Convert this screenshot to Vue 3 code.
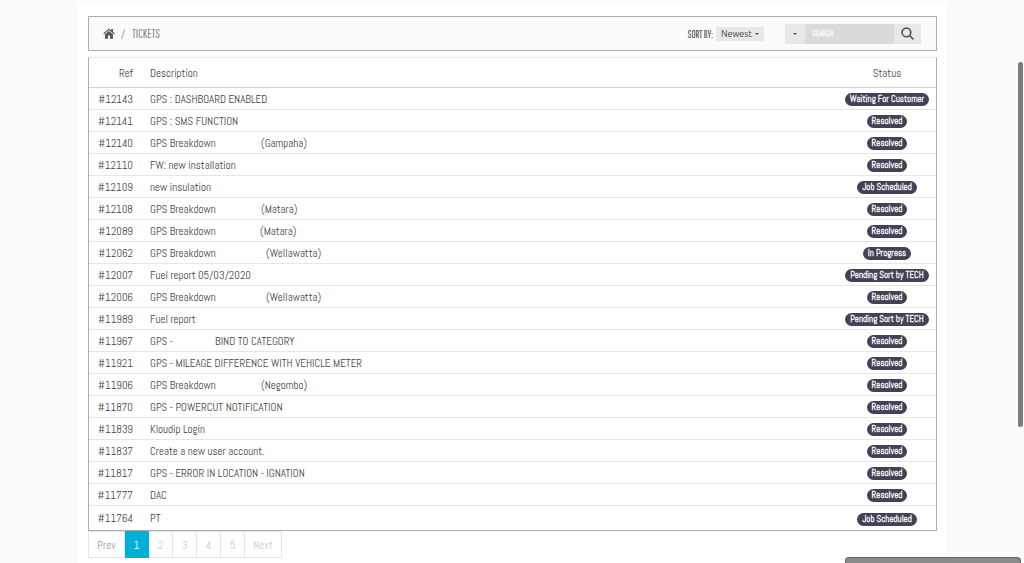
<script setup>
import { ref } from 'vue'

const sort = ref('Newest')
const query = ref('')
const page = ref(1)
const pages = [1, 2, 3, 4, 5]

// `lead` is the width reserved for the first part when a hidden plate number follows it
const tickets = [
  { id: 12143, text: 'GPS : DASHBOARD ENABLED', status: 'Waiting For Customer' },
  { id: 12141, text: 'GPS : SMS FUNCTION', status: 'Resolved' },
  { id: 12140, text: 'GPS Breakdown', lead: 111, rest: '(Gampaha)', status: 'Resolved' },
  { id: 12110, text: 'FW: new installation', status: 'Resolved' },
  { id: 12109, text: 'new insulation', status: 'Job Scheduled' },
  { id: 12108, text: 'GPS Breakdown', lead: 111, rest: '(Matara)', status: 'Resolved' },
  { id: 12089, text: 'GPS Breakdown', lead: 110, rest: '(Matara)', status: 'Resolved' },
  { id: 12062, text: 'GPS Breakdown', lead: 116, rest: '(Wellawatta)', status: 'In Progress' },
  { id: 12007, text: 'Fuel report 05/03/2020', status: 'Pending Sort by TECH' },
  { id: 12006, text: 'GPS Breakdown', lead: 116, rest: '(Wellawatta)', status: 'Resolved' },
  { id: 11989, text: 'Fuel report', status: 'Pending Sort by TECH' },
  { id: 11967, text: 'GPS -', lead: 65, rest: 'BIND TO CATEGORY', status: 'Resolved' },
  { id: 11921, text: 'GPS - MILEAGE DIFFERENCE WITH VEHICLE METER', status: 'Resolved' },
  { id: 11906, text: 'GPS Breakdown', lead: 111, rest: '(Negombo)', status: 'Resolved' },
  { id: 11870, text: 'GPS - POWERCUT NOTIFICATION', status: 'Resolved' },
  { id: 11839, text: 'Kloudip Login', status: 'Resolved' },
  { id: 11837, text: 'Create a new user account.', status: 'Resolved' },
  { id: 11817, text: 'GPS - ERROR IN LOCATION - IGNATION', status: 'Resolved' },
  { id: 11777, text: 'DAC', status: 'Resolved' },
  { id: 11764, text: 'PT', status: 'Job Scheduled' },
]
</script>

<template>
  <main class="panel">
    <header class="bar">
      <nav class="crumbs" aria-label="Breadcrumb">
        <a href="#" class="home" aria-label="Home">
          <svg viewBox="0 0 24 22" width="12" height="11" aria-hidden="true">
            <path d="M12 1 0.5 11.2 2 13 12 4.2 22 13 23.5 11.2 20 8V2h-3.5v3z" />
            <path d="M12 6 4 13v8.500h6V15h4v6.500h6V13z" />
          </svg>
        </a>
        <span class="slash">/</span>
        <a href="#" class="current">TICKETS</a>
      </nav>
      <label class="sort-label" for="sort">SORT BY:</label>
      <div class="sort">
        <select id="sort" v-model="sort">
          <option>Newest</option>
          <option>Oldest</option>
        </select>
        <i class="caret"></i>
      </div>
      <form class="search" @submit.prevent>
        <button type="button" class="scope" aria-label="Search options"><i class="caret"></i></button>
        <input v-model="query" type="text" placeholder="SEARCH" aria-label="Search" />
        <button type="submit" class="go" aria-label="Search">
          <svg viewBox="0 0 24 24" width="13" height="13" aria-hidden="true">
            <circle cx="10" cy="10" r="8" />
            <path d="M16 16 22 22" />
          </svg>
        </button>
      </form>
    </header>

    <table class="tickets">
      <thead>
        <tr>
          <th class="ref">Ref</th>
          <th class="desc">Description</th>
          <th class="status">Status</th>
        </tr>
      </thead>
      <tbody>
        <tr v-for="t in tickets" :key="t.id">
          <td class="ref">#{{ t.id }}</td>
          <td class="desc">
            <span class="lead" :style="t.lead ? { width: t.lead + 'px' } : null">{{ t.text }}</span><span v-if="t.rest">{{ t.rest }}</span>
          </td>
          <td class="status"><span class="badge">{{ t.status }}</span></td>
        </tr>
      </tbody>
    </table>

    <nav class="pager" aria-label="Pages">
      <button type="button" class="prev">Prev</button>
      <button v-for="n in pages" :key="n" type="button" :class="{ active: n === page }" @click="page = n">{{ n }}</button>
      <button type="button" class="next">Next</button>
    </nav>
  </main>
  <div class="scroll-thumb"></div>
  <div class="dock"></div>
</template>

<style>
html {
  overflow: hidden;
}
body {
  background: #fbfbfb;
}
</style>

<style scoped>
* {
  box-sizing: border-box;
}
.panel {
  margin: 2px 78px 0;
  padding: 14px 9px 20px 10px;
  background: #fff;
  color: #444;
  font-family: "Abel", "Roboto Condensed", "Roboto", sans-serif;
  font-size: 11px;
}
button,
input,
select {
  margin: 0;
  padding: 0;
  border: 0;
  border-radius: 0;
  background: none;
  color: inherit;
  font: inherit;
}
.bar {
  display: flex;
  align-items: center;
  height: 35px;
  padding: 0 15px 0 14px;
  border: 1px solid #a9aeb0;
  background: #fbfbfb;
}
.crumbs {
  display: flex;
  flex: 1;
  align-items: center;
  color: #888;
}
.crumbs a {
  color: inherit;
  text-decoration: none;
}
.home {
  display: flex;
}
.home svg {
  fill: #555;
}
.slash {
  margin: 0 7px 0 6px;
}
.crumbs .current {
  font-family: "Pathway Gothic One", "Antonio", "Abel", "Roboto", sans-serif;
  font-size: 12px;
  line-height: 14px;
}
.sort-label {
  margin-right: 3px;
  font-family: "Pathway Gothic One", "Antonio", "Abel", "Roboto", sans-serif;
  font-size: 10px;
  line-height: 14px;
}
.sort {
  position: relative;
  width: 48px;
  height: 14px;
  margin-right: 21px;
  background: #e8e8e9;
}
.sort select {
  display: block;
  width: 100%;
  height: 14px;
  padding-left: 5px;
  appearance: none;
  font-family: "Ubuntu", "Noto Sans", sans-serif;
  font-size: 9px;
  line-height: 14px;
}
.caret {
  display: block;
  border: 2px solid transparent;
  border-top-color: #555;
  border-bottom: 0;
}
.sort .caret {
  position: absolute;
  top: 6px;
  right: 5px;
  pointer-events: none;
}
.search {
  display: flex;
  height: 20px;
  background: #e8e8e9;
}
.scope {
  display: flex;
  align-items: center;
  justify-content: center;
  width: 20px;
}
.search input {
  width: 89px;
  padding-left: 7px;
  background: #dadadc;
  font-size: 7px;
}
.search input::placeholder {
  color: #fff;
  font-weight: bold;
  opacity: 1;
}
.go {
  display: flex;
  align-items: center;
  justify-content: center;
  width: 27px;
}
.go svg {
  fill: none;
  stroke: #555;
  stroke-width: 3;
  stroke-linecap: round;
}
.tickets {
  width: 100%;
  margin-top: 6px;
  border: 1px solid #a9aeb0;
  border-top-color: #e8eaeb;
  border-collapse: separate;
  border-spacing: 0;
  table-layout: fixed;
}
.tickets th {
  height: 30px;
  padding: 0;
  border-bottom: 1px solid #cfd4d6;
  font-weight: normal;
}
.tickets td {
  height: 22px;
  padding: 0;
  border-bottom: 1px solid #e4e7e8;
  line-height: 14px;
}
.tickets tbody tr:last-child td {
  height: 24px;
  border-bottom: 0;
}
.tickets .ref {
  width: 52px;
  padding-right: 8px;
  text-align: right;
}
.tickets .desc {
  padding-left: 9px;
  text-align: left;
  white-space: nowrap;
}
.tickets .status {
  width: 98px;
  text-align: center;
  white-space: nowrap;
}
.badge {
  display: inline-block;
  margin-top: 2px;
  padding: 0 5px;
  border-radius: 7px;
  background: #444055;
  color: #fff;
  font-size: 9px;
  font-weight: bold;
  line-height: 13px;
  vertical-align: top;
}
.lead {
  display: inline-block;
}
.pager {
  display: flex;
}
.pager button {
  width: 24px;
  height: 27px;
  border: 1px solid #e1e6e7;
  border-left: 0;
  color: #ccc;
}
.pager .prev {
  width: 37px;
  border-left: 1px solid #e1e6e7;
  color: #999;
}
.pager .next {
  width: 37px;
}
.pager .active {
  border-color: #00b0d8;
  background: #00b0d8;
  color: #fff;
}
.scroll-thumb {
  position: fixed;
  top: 62px;
  right: 1px;
  width: 5px;
  height: 365px;
  border-radius: 3px;
  background: #7d7d7d;
}
.dock {
  position: fixed;
  right: 3px;
  bottom: 0;
  width: 176px;
  height: 6px;
  border: 1px solid #666;
  border-bottom: 0;
  border-radius: 4px 4px 0 0;
  background: #8a8a8a;
}
</style>
